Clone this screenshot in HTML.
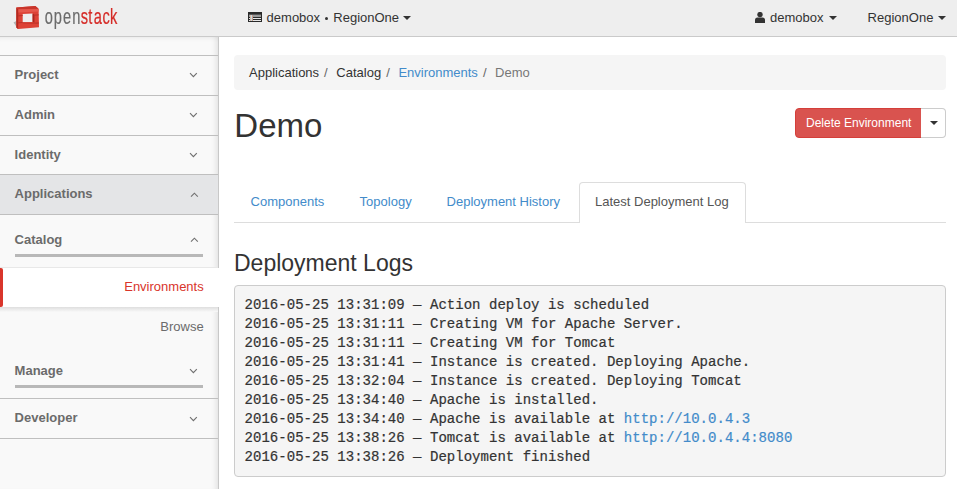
<!DOCTYPE html>
<html><head><meta charset="utf-8">
<style>
*{box-sizing:border-box;margin:0;padding:0}
html,body{width:957px;height:489px;overflow:hidden;background:#fff;font-family:"Liberation Sans",sans-serif;font-size:13px;color:#333}
a{color:#428bca;text-decoration:none}
.abs{position:absolute;white-space:nowrap}
#nav{position:absolute;left:0;top:0;width:957px;height:37px;background:#eee;border-bottom:1px solid #cacaca}
.nt{position:absolute;top:10px;font-size:13px;color:#333;line-height:15px;white-space:nowrap}
.caret{position:absolute;width:0;height:0;border-top:4px solid #333;border-left:4px solid transparent;border-right:4px solid transparent}
#side{position:absolute;left:0;top:37px;width:219px;height:452px;background:#f9f9f9;border-right:1px solid #c8c8c8;box-shadow:inset -6px 0 6px -5px rgba(0,0,0,.12),inset 0 6px 5px -5px rgba(0,0,0,.07)}
.hl{position:absolute;left:0;width:218px;height:1px;background:#bfbfbf}
.st{position:absolute;left:14.6px;font-weight:bold;color:#6b6b6b;font-size:13px;line-height:15px}
.chev{position:absolute;left:190px}
.bar{position:absolute;left:15px;width:188px;height:3px;background:#b8b8b8}
.bc{position:absolute;left:234px;top:55px;width:712px;height:35px;background:#f5f5f5;border-radius:4px}
pre{font-family:"Liberation Mono",monospace}
pre a{-webkit-text-stroke:.2px #428bca}
.tab{position:absolute;top:194px;font-size:13px;line-height:15px;color:#428bca}
</style></head><body>
<div id="nav">
  <svg class="abs" style="left:0;top:0;will-change:transform" width="130" height="36" viewBox="0 0 130 36">
    <path d="M13.5 22.5 L16.3 21 L16.3 26.5 Z" fill="#9a9a9a" opacity=".7"/>
    <path d="M16.3 7.6 L35.3 6.1 L38.6 8.8 L39 27.2 L18.1 28.9 L16.3 27.5 Z" fill="#dd4236"/>
    <path d="M16.3 7.6 L18.4 9.2 L18.1 28.9 L16.3 27.5 Z" fill="#b3291f"/>
    <path d="M18.4 9.2 L38.6 8.8 L35.3 6.1 L16.3 7.6 Z" fill="#c8352b"/>
    <path d="M18.4 9.3 L38.6 8.9 L38.7 11.5 L18.4 12.5 Z" fill="#e6584c"/>
    <path d="M22.7 13.9 L32.6 13.5 L32.6 22 L22.7 22.3 Z" fill="#eee"/>
    <path d="M32.6 13.5 L34.4 14.6 L34.4 22.8 L32.6 22 Z" fill="#a8271f"/>
    <path d="M18.4 15.4 L22.7 15.3 L22.7 16.1 L18.4 16.2 Z" fill="#b02c24"/>
    <path d="M34.4 14.7 L38.8 14.5 L38.8 15.3 L34.4 15.5 Z" fill="#b02c24"/>
    <path d="M18.2 22.4 L22.7 22.3 L22.7 23.1 L18.2 23.2 Z" fill="#b02c24"/>
    <path d="M34.4 22.8 L38.9 22.6 L38.9 23.4 L34.4 23.6 Z" fill="#b02c24"/>
    <path d="M22.7 22.3 L34.4 22.8 L34.4 24 L22.7 23.4 Z" fill="#c9362c"/>
    <g transform="scale(0.65,1)">
    <text x="68.90 82.67 96.79 111.28" y="24.4" font-family="Liberation Sans" font-size="22.5" fill="#6b6b6b" stroke="#6b6b6b" stroke-width=".25">open</text>
    <text x="124.40 135.62 144.09 157.56 169.28" y="24.4" font-family="Liberation Sans" font-size="22.5" fill="#d52b27" stroke="#d52b27" stroke-width=".25">stack</text>
    </g>
  </svg>
  <svg class="abs" style="left:248px;top:12px;shape-rendering:crispEdges" width="14" height="10" viewBox="0 0 14 10">
    <rect x="0" y="0" width="14" height="10" rx="1" fill="#2a2a2a"/>
    <rect x="1" y="3" width="12" height="2" fill="#9a9a9a"/>
    <rect x="1" y="2" width="12" height="1" fill="#555"/>
    <rect x="1" y="6" width="12" height="1" fill="#e6e6e6"/>
    <rect x="1" y="8" width="12" height="1" fill="#e6e6e6"/>
    <rect x="2" y="3" width="1" height="6" fill="#d8b8a8"/>
    <rect x="3" y="3" width="1" height="6" fill="#c0dde2"/>
    <rect x="4" y="3" width="1" height="6" fill="#c89888"/>
  </svg>
  <div class="nt" style="left:266.6px">demobox</div>
  <div class="abs" style="left:325px;top:17.3px;width:3px;height:3px;background:#333;border-radius:50%"></div>
  <div class="nt" style="left:333.3px">RegionOne</div>
  <span class="caret" style="left:403px;top:16px"></span>
  <svg class="abs" style="left:755px;top:12px" width="10" height="11" viewBox="0 0 10 11">
    <circle cx="5" cy="2.6" r="2.7" fill="#333"/>
    <path d="M0 11 L0 8 Q0 5.5 2.5 5.5 L7.5 5.5 Q10 5.5 10 8 L10 11 Z" fill="#333"/>
  </svg>
  <div class="nt" style="left:770px">demobox</div>
  <span class="caret" style="left:828.5px;top:16px"></span>
  <div class="nt" style="left:867.6px">RegionOne</div>
  <span class="caret" style="left:937.6px;top:16px"></span>
</div>
<div id="side"></div>
<div class="hl" style="top:55px"></div>
<div class="hl" style="top:95px"></div>
<div class="hl" style="top:135px"></div>
<div class="abs" style="left:0;top:175px;width:218px;height:39px;background:#e4e5e7"></div>
<div class="hl" style="top:174px"></div>
<div class="hl" style="top:214px"></div>
<div class="hl" style="top:398px"></div>
<div class="hl" style="top:438px"></div>
<span class="st" style="top:67px">Project</span>
<span class="st" style="top:107px">Admin</span>
<span class="st" style="top:147px">Identity</span>
<span class="st" style="top:186px">Applications</span>
<span class="st" style="top:232px">Catalog</span>
<div class="bar" style="top:254px"></div>
<div class="abs" style="left:0;top:267px;width:218px;height:1px;background:#e8e8e8"></div>
<div class="abs" style="left:0;top:268px;width:221px;height:39px;background:#fff"></div>
<div class="abs" style="left:0;top:307px;width:218px;height:5px;background:linear-gradient(#dedede,#f9f9f9)"></div>
<div class="abs" style="left:0;top:268px;width:3px;height:39px;background:#d9352b;border-radius:0 2px 2px 0"></div>
<span class="abs" style="right:753.3px;top:279px;color:#d9352b;font-size:13px;line-height:15px">Environments</span>
<span class="abs" style="right:753.3px;top:319px;color:#6b6b6b;font-size:13px;line-height:15px">Browse</span>
<span class="st" style="top:363px">Manage</span>
<div class="bar" style="top:385px"></div>
<span class="st" style="top:410px">Developer</span>
<svg class="abs" style="left:188.6px;top:72px" width="9" height="6" viewBox="0 0 9 6"><path d="M1 1.2 L4.4 4.6 L7.8 1.2" fill="none" stroke="#707070" stroke-width="1.15"/></svg>
<svg class="abs" style="left:188.6px;top:112px" width="9" height="6" viewBox="0 0 9 6"><path d="M1 1.2 L4.4 4.6 L7.8 1.2" fill="none" stroke="#707070" stroke-width="1.15"/></svg>
<svg class="abs" style="left:188.6px;top:152px" width="9" height="6" viewBox="0 0 9 6"><path d="M1 1.2 L4.4 4.6 L7.8 1.2" fill="none" stroke="#707070" stroke-width="1.15"/></svg>
<svg class="abs" style="left:189.5px;top:192px" width="9" height="6" viewBox="0 0 9 6"><path d="M1 4.6 L4.4 1.2 L7.8 4.6" fill="none" stroke="#707070" stroke-width="1.15"/></svg>
<svg class="abs" style="left:189.5px;top:237px" width="9" height="6" viewBox="0 0 9 6"><path d="M1 4.6 L4.4 1.2 L7.8 4.6" fill="none" stroke="#707070" stroke-width="1.15"/></svg>
<svg class="abs" style="left:188.6px;top:368px" width="9" height="6" viewBox="0 0 9 6"><path d="M1 1.2 L4.4 4.6 L7.8 1.2" fill="none" stroke="#707070" stroke-width="1.15"/></svg>
<svg class="abs" style="left:188.6px;top:416px" width="9" height="6" viewBox="0 0 9 6"><path d="M1 1.2 L4.4 4.6 L7.8 1.2" fill="none" stroke="#707070" stroke-width="1.15"/></svg>
<div class="bc"></div>
<div class="abs" style="left:249px;top:65px;font-size:13px;line-height:15px">Applications<span style="padding:0 5px;color:#666">/&nbsp;</span>Catalog<span style="padding:0 5px;color:#666">/&nbsp;</span><a>Environments</a><span style="padding:0 5px;color:#666">/&nbsp;</span><span style="color:#777">Demo</span></div>
<div class="abs" style="left:234.3px;top:107px;font-size:33px;line-height:38px">Demo</div>
<div class="abs" style="left:795px;top:108px;width:127px;height:30px;background:#d9534f;border:1px solid #d43f3a;border-radius:4px 0 0 4px;color:#fff;font-size:12px;line-height:14px;padding:7px 0 0 10px">Delete Environment</div>
<div class="abs" style="left:921px;top:108px;width:25px;height:30px;background:#fff;border:1px solid #ccc;border-left:0;border-radius:0 4px 4px 0"></div>
<span class="caret" style="left:930px;top:121px"></span>
<div class="abs" style="left:234px;top:222px;width:712px;height:1px;background:#ddd"></div>
<div class="abs" style="left:579px;top:182px;width:167px;height:41px;background:#fff;border:1px solid #ddd;border-bottom:0;border-radius:4px 4px 0 0"></div>
<span class="tab" style="left:250.6px">Components</span>
<span class="tab" style="left:359.6px">Topology</span>
<span class="tab" style="left:446.6px">Deployment History</span>
<span class="tab" style="left:595px;color:#555">Latest Deployment Log</span>
<div class="abs" style="left:234px;top:250px;font-size:23px;line-height:26px">Deployment Logs</div>
<pre style="position:absolute;left:234px;top:285px;width:712px;height:192px;background:#f5f5f5;border:1px solid #ccc;border-radius:4px;padding:10px 0 0 9.6px;font-size:14px;line-height:19px;color:#333;letter-spacing:.025px;-webkit-text-stroke:.2px #333">2016-05-25 13:31:09 — Action deploy is scheduled
2016-05-25 13:31:11 — Creating VM for Apache Server.
2016-05-25 13:31:11 — Creating VM for Tomcat
2016-05-25 13:31:41 — Instance is created. Deploying Apache.
2016-05-25 13:32:04 — Instance is created. Deploying Tomcat
2016-05-25 13:34:40 — Apache is installed.
2016-05-25 13:34:40 — Apache is available at <a>http://10.0.4.3</a>
2016-05-25 13:38:26 — Tomcat is available at <a>http://10.0.4.4:8080</a>
2016-05-25 13:38:26 — Deployment finished</pre>
</body></html>
